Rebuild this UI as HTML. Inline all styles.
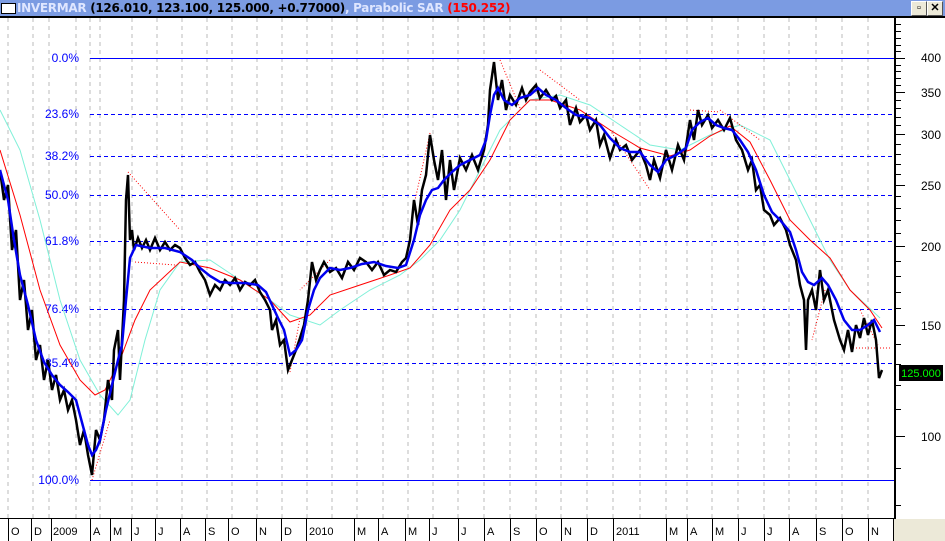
<!DOCTYPE html>
<html><head><meta charset="utf-8"><style>
html,body{margin:0;padding:0;width:945px;height:541px;overflow:hidden;background:#fff;font-family:"Liberation Sans",sans-serif}
#title{position:absolute;left:0;top:0;width:945px;height:16px;background:#7b9be2;font:bold 12px "DejaVu Sans","Liberation Sans",sans-serif;line-height:16px;white-space:nowrap}
#title .ic{position:absolute;left:1px;top:3px;width:13px;height:9px;background:#fff;border:1px solid #000}
#title .t{position:absolute;left:17px;top:0;letter-spacing:-0.3px}
.btn{position:absolute;top:1px;width:14px;height:13px;background:#ece9d8;border:1px solid #fff;border-right-color:#555;border-bottom-color:#555;font:bold 11px "Liberation Sans",sans-serif;text-align:center;line-height:13px}
</style></head><body>
<div id="title"><div class="ic"></div><div class="t"><span style="color:#dfe6ff">INVERMAR</span> <span style="color:#000">(126.010, 123.100, 125.000, +0.77000)</span><span style="color:#dfe6ff">, Parabolic SAR</span> <span style="color:#f00">(150.252)</span></div>
<div class="btn" style="left:911px">&#9643;</div><div class="btn" style="left:927px">✕</div></div>
<svg width="945" height="541" style="position:absolute;left:0;top:0" xmlns="http://www.w3.org/2000/svg">
<rect x="0" y="16" width="945" height="2" fill="#000"/>
<g stroke="#bbb" stroke-dasharray="4,4" stroke-width="1">
<path d="M8 18V518M33 18V518M49 18V518M76 18V518M90 18V518M100 18V518M132 18V518M157 18V518M182 18V518M207 18V518M232 18V518M257 18V518M282 18V518M307 18V518M332 18V518M357 18V518M383 18V518M408 18V518M433 18V518M458 18V518M484 18V518M510 18V518M536 18V518M561 18V518M587 18V518M613 18V518M640 18V518M666 18V518M687 18V518M712 18V518M738 18V518M764 18V518M789 18V518M816 18V518M842 18V518M868 18V518"/>
</g>
<g font-family="Liberation Sans,sans-serif" font-size="12" fill="#0000ff" text-anchor="end">
<text x="79" y="62">0.0%</text><text x="79" y="118">23.6%</text><text x="79" y="160">38.2%</text><text x="79" y="199">50.0%</text><text x="79" y="245">61.8%</text><text x="79" y="313">76.4%</text><text x="79" y="367">85.4%</text><text x="79" y="484">100.0%</text>
</g>
<g stroke="#0000ff" stroke-width="1">
<path d="M90 58.5H895M90 480.5H895"/>
<path stroke-dasharray="4,3" d="M90 114.5H895M90 156.5H895M90 195.5H895M90 241.5H895M90 309.5H895M90 363.5H895"/>
</g>
<polyline fill="none" stroke="#7ff0d8" stroke-width="1" points="0,110 20,150 40,220 60,300 80,360 100,395 118,415 130,400 145,340 160,290 180,262 210,260 240,280 270,300 290,315 320,325 340,310 370,290 400,275 420,260 440,240 460,210 480,170 500,130 530,100 560,95 590,105 620,125 650,145 680,150 710,135 740,125 770,140 790,180 810,220 830,260 850,290 880,318"/>
<polyline fill="none" stroke="#f00" stroke-width="1" points="0,150 20,215 40,290 60,345 80,380 95,395 105,390 120,360 135,320 150,290 180,262 210,268 240,280 270,300 290,322 310,315 330,295 360,285 390,275 410,268 430,245 450,210 470,190 490,160 510,120 530,100 550,100 580,110 610,130 640,148 670,156 690,150 710,136 730,126 750,142 770,180 790,220 810,240 830,258 850,290 870,310 882,328"/>
<g fill="none" stroke="#f00" stroke-width="1" stroke-dasharray="1,2">
<path d="M128 172L180 230M135 262L175 265M300 318L290 372M330 260L300 290M92 480L110 420M430 133L415 200M500 60L520 108M540 70L580 100M610 130L650 190M690 110L720 112M720 110L760 140M825 290L812 340M860 310L878 345M850 348H890"/>
</g>
<polyline fill="none" stroke="#000" stroke-width="2.5" points="0,170 4,200 8,185 12,250 16,230 20,300 24,280 28,330 32,310 36,360 40,345 44,380 48,360 52,390 56,375 60,400 64,390 68,410 72,400 76,420 80,445 84,430 88,455 92,475 96,430 100,440 104,420 108,380 112,400 114,350 118,330 120,380 124,300 126,200 128,175 130,240 132,230 134,250 138,238 142,248 146,240 150,250 155,238 160,250 165,242 170,250 175,245 180,248 185,258 190,265 195,262 200,272 205,280 210,295 215,285 220,290 225,280 230,285 235,278 240,290 245,282 250,285 255,280 260,292 265,300 270,310 272,330 276,320 280,345 284,340 288,370 292,360 296,350 300,338 304,325 308,300 312,262 316,280 320,270 324,262 330,272 336,268 342,278 348,262 354,270 360,258 366,262 372,270 378,262 384,275 390,270 396,272 402,262 406,258 410,240 414,200 418,225 422,190 426,175 430,135 434,160 438,180 442,150 446,200 450,160 454,190 460,158 466,170 472,155 478,170 484,150 488,125 490,90 494,62 498,100 502,80 506,110 510,95 516,105 522,88 526,100 530,92 536,85 540,98 546,90 552,100 556,96 560,108 566,100 570,125 576,108 580,122 586,115 590,130 596,120 600,145 604,135 610,158 616,140 620,150 626,145 632,160 640,150 646,165 650,180 654,160 660,178 666,150 672,170 678,145 684,160 690,120 694,140 698,110 702,125 708,115 712,128 718,120 724,130 730,118 736,140 742,150 748,170 752,160 756,190 760,185 764,210 770,215 774,225 780,218 786,230 790,245 796,260 800,285 804,300 806,350 808,300 812,290 816,310 820,270 824,300 828,290 834,320 840,340 844,350 848,330 852,352 856,325 860,338 864,318 868,335 872,320 876,340 879,378 882,370"/>
<polyline fill="none" stroke="#0000ee" stroke-width="2.5" points="0,170 8,200 14,240 20,275 28,305 36,340 44,362 52,375 60,385 68,392 76,400 80,415 84,430 88,445 92,455 96,450 100,440 106,410 112,385 118,360 122,345 126,300 130,258 136,245 150,248 165,248 180,252 192,260 200,268 210,276 220,282 232,283 245,283 258,285 266,292 272,305 278,318 284,330 290,355 296,350 302,340 308,310 314,290 320,278 330,268 340,270 350,268 362,264 374,262 386,266 398,268 406,265 414,240 420,215 426,200 432,190 438,188 444,180 452,172 460,165 470,160 480,155 486,140 490,115 494,95 498,88 504,100 512,105 520,98 530,95 538,88 546,95 556,100 566,108 576,115 590,118 600,125 610,138 620,148 630,152 640,152 650,165 658,172 666,160 676,155 686,148 692,130 700,122 708,118 716,125 724,128 732,130 740,140 748,152 756,170 764,195 772,212 780,220 790,232 796,250 802,272 808,282 814,285 822,278 828,285 836,300 844,320 852,330 860,330 868,325 874,320 880,332"/>
<rect x="894" y="18" width="2" height="501" fill="#000"/>
<g stroke="#000" stroke-width="1">
<path d="M896 58.5H905M896 92.5H905M896 134.5H905M896 185.5H905M896 246.5H905M896 325.5H905M896 436.5H905"/>
<path d="M896 24.5H901M896 31.5H901M896 38.5H901M896 45.5H901M896 51.5H901M896 65.5H901M896 71.5H901M896 78.5H901M896 85.5H901M896 100.5H901M896 108.5H901M896 117.5H901M896 125.5H901M896 144.5H901M896 154.5H901M896 164.5H901M896 174.5H901M896 196.5H901M896 208.5H901M896 220.5H901M896 233.5H901M896 261.5H901M896 276.5H901M896 292.5H901M896 308.5H901M896 344.5H901M896 364.5H901M896 385.5H901M896 409.5H901M896 468.5H901M896 505.5H901"/>
</g>
<g font-family="Liberation Sans,sans-serif" font-size="12" fill="#000" text-anchor="end">
<text x="941" y="62">400</text><text x="941" y="97">350</text><text x="941" y="139">300</text><text x="941" y="190">250</text><text x="941" y="251">200</text><text x="941" y="330">150</text><text x="941" y="441">100</text>
</g>
<rect x="899" y="365" width="44" height="16" fill="#000"/>
<text x="921" y="377" font-family="Liberation Sans,sans-serif" font-size="11" fill="#00ff00" text-anchor="middle">125.000</text>
<rect x="0" y="518" width="896" height="1" fill="#000"/>
<rect x="0" y="519" width="894" height="22" fill="#fff"/>
<rect x="894" y="519" width="51" height="22" fill="#ece9d8"/>
<g stroke="#000" stroke-width="1"><path d="M8.5 519V541M31.5 519V541M51.5 519V541M90.5 519V541M110.5 519V541M131.5 519V541M155.5 519V541M180.5 519V541M205.5 519V541M228.5 519V541M256.5 519V541M281.5 519V541M306.5 519V541M354.5 519V541M378.5 519V541M405.5 519V541M429.5 519V541M458.5 519V541M484.5 519V541M510.5 519V541M536.5 519V541M561.5 519V541M587.5 519V541M613.5 519V541M666.5 519V541M687.5 519V541M712.5 519V541M738.5 519V541M764.5 519V541M789.5 519V541M816.5 519V541M842.5 519V541M868.5 519V541M893.5 519V541"/></g>
<g font-family="Liberation Sans,sans-serif" font-size="11" fill="#000">
<text x="11" y="535">O</text><text x="34" y="535">D</text><text x="53" y="535">2009</text><text x="93" y="535">A</text><text x="113" y="535">M</text><text x="134" y="535">J</text><text x="158" y="535">J</text><text x="183" y="535">A</text><text x="208" y="535">S</text><text x="231" y="535">O</text><text x="259" y="535">N</text><text x="284" y="535">D</text><text x="309" y="535">2010</text><text x="357" y="535">M</text><text x="381" y="535">A</text><text x="408" y="535">M</text><text x="432" y="535">J</text><text x="461" y="535">J</text><text x="487" y="535">A</text><text x="513" y="535">S</text><text x="539" y="535">O</text><text x="564" y="535">N</text><text x="590" y="535">D</text><text x="616" y="535">2011</text><text x="669" y="535">M</text><text x="690" y="535">A</text><text x="715" y="535">M</text><text x="741" y="535">J</text><text x="767" y="535">J</text><text x="792" y="535">A</text><text x="819" y="535">S</text><text x="845" y="535">O</text><text x="871" y="535">N</text>
</g>
</svg>
</body></html>
